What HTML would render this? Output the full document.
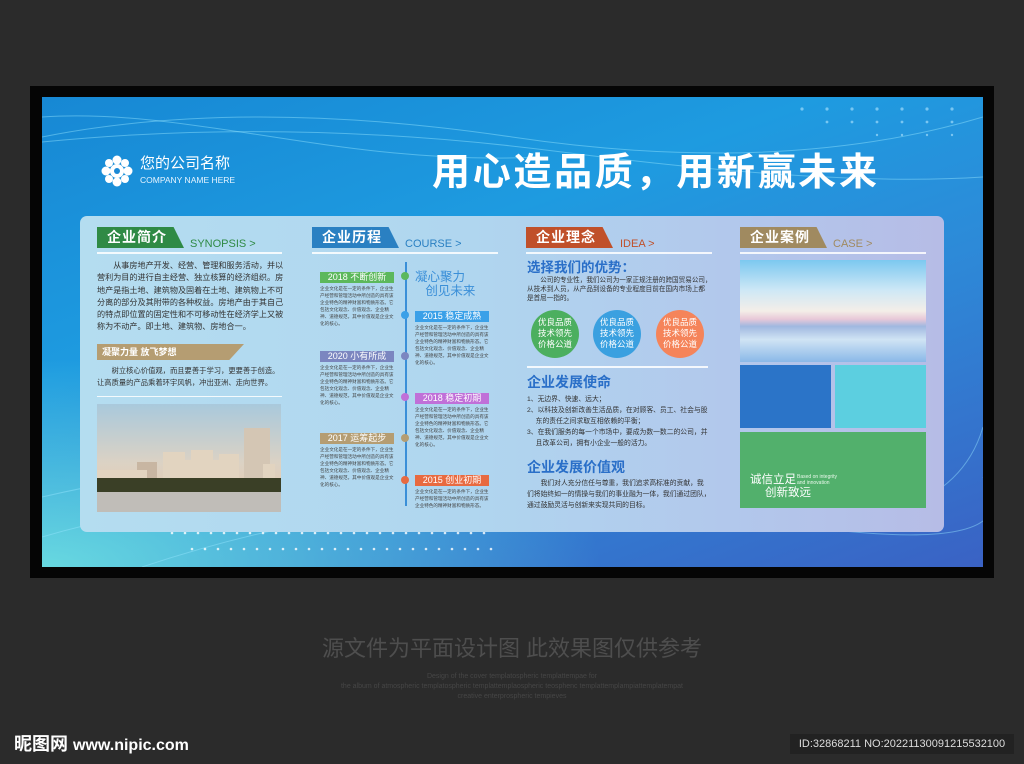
<!DOCTYPE html>
<html><head><meta charset="utf-8">
<style>
*{margin:0;padding:0;box-sizing:border-box}
body{width:1024px;height:764px;overflow:hidden;background:#2b2b2b;font-family:"Liberation Sans","Noto Sans CJK SC",sans-serif;position:relative}
.a{position:absolute}
.frame{left:30px;top:86px;width:964px;height:492px;background:#050505}
.bg{left:42px;top:97px;width:941px;height:470px;overflow:hidden;
background:linear-gradient(160deg,#1788d4 0%,#1e9be0 35%,#2d8ad8 60%,#3a62c4 100%)}
.bg:before{content:"";position:absolute;left:0;bottom:0;width:60%;height:45%;background:radial-gradient(ellipse at 0% 100%,rgba(110,225,225,.9),rgba(110,225,225,0) 70%)}
.panel{left:80px;top:216px;width:864px;height:316px;border-radius:7px;background:linear-gradient(90deg,#b4ddf0 0%,#b0d6ef 45%,#b2c8ec 75%,#b6bce6 100%)}
.tag{height:21px;color:#fff;font-weight:bold;font-size:14px;line-height:21px;padding-left:10px;clip-path:polygon(0 0,88% 0,100% 100%,0 100%);letter-spacing:1px}
.en{font-size:11px;line-height:12px}
.ul{height:2px;background:rgba(255,255,255,.85)}
.p{font-size:8.1px;line-height:12.3px;color:#333;white-space:nowrap}
.t{font-size:4.6px;line-height:7px;color:#444;width:76px}
.lab{height:11px;width:74px;color:#fff;font-size:9px;line-height:11px;text-align:center}
.dot{width:8px;height:8px;border-radius:50%}
.circ{width:48px;height:48px;border-radius:50%;color:#fff;font-size:8.5px;line-height:11px;text-align:center;padding-top:7px}
.h{color:#2a6fc8;font-weight:bold}
.s{font-size:6.8px;line-height:11px;color:#333;white-space:nowrap}
</style></head><body>
<div class="a frame"></div>
<div class="a bg">
<svg class="a" style="left:0;top:0" width="941" height="470">
<g fill="none" stroke="rgba(150,230,255,.45)" stroke-width="1">
<path d="M0 40 Q200 0 470 40 T941 20"/><path d="M0 45 Q250 20 520 55 T941 80"/>
<path d="M0 20 C150 10 300 70 500 60"/><path d="M0 400 Q300 330 600 400 T941 330"/>
<path d="M100 470 Q400 370 700 420 T941 380"/><path d="M0 440 Q200 380 500 410"/>
</g>
<g fill="rgba(180,230,255,.6)">
<circle cx="760" cy="12" r="1.6"/><circle cx="785" cy="12" r="1.6"/><circle cx="810" cy="12" r="1.6"/><circle cx="835" cy="12" r="1.6"/><circle cx="860" cy="12" r="1.6"/><circle cx="885" cy="12" r="1.6"/><circle cx="910" cy="12" r="1.6"/>
<circle cx="785" cy="25" r="1.4"/><circle cx="810" cy="25" r="1.4"/><circle cx="835" cy="25" r="1.4"/><circle cx="860" cy="25" r="1.4"/><circle cx="885" cy="25" r="1.4"/><circle cx="910" cy="25" r="1.4"/>
<circle cx="835" cy="38" r="1.2"/><circle cx="860" cy="38" r="1.2"/><circle cx="885" cy="38" r="1.2"/><circle cx="910" cy="38" r="1.2"/>
</g>
<g fill="rgba(255,255,255,.8)">
<circle cx="130" cy="436" r="1.3"/><circle cx="143" cy="436" r="1.3"/><circle cx="156" cy="436" r="1.3"/><circle cx="169" cy="436" r="1.3"/><circle cx="182" cy="436" r="1.3"/><circle cx="195" cy="436" r="1.3"/><circle cx="208" cy="436" r="1.3"/><circle cx="221" cy="436" r="1.3"/><circle cx="234" cy="436" r="1.3"/><circle cx="247" cy="436" r="1.3"/><circle cx="260" cy="436" r="1.3"/><circle cx="273" cy="436" r="1.3"/><circle cx="286" cy="436" r="1.3"/><circle cx="299" cy="436" r="1.3"/><circle cx="312" cy="436" r="1.3"/><circle cx="325" cy="436" r="1.3"/><circle cx="338" cy="436" r="1.3"/><circle cx="351" cy="436" r="1.3"/><circle cx="364" cy="436" r="1.3"/><circle cx="377" cy="436" r="1.3"/><circle cx="390" cy="436" r="1.3"/><circle cx="403" cy="436" r="1.3"/><circle cx="416" cy="436" r="1.3"/><circle cx="429" cy="436" r="1.3"/><circle cx="442" cy="436" r="1.3"/>
<circle cx="150" cy="452" r="1.3"/><circle cx="163" cy="452" r="1.3"/><circle cx="176" cy="452" r="1.3"/><circle cx="189" cy="452" r="1.3"/><circle cx="202" cy="452" r="1.3"/><circle cx="215" cy="452" r="1.3"/><circle cx="228" cy="452" r="1.3"/><circle cx="241" cy="452" r="1.3"/><circle cx="254" cy="452" r="1.3"/><circle cx="267" cy="452" r="1.3"/><circle cx="280" cy="452" r="1.3"/><circle cx="293" cy="452" r="1.3"/><circle cx="306" cy="452" r="1.3"/><circle cx="319" cy="452" r="1.3"/><circle cx="332" cy="452" r="1.3"/><circle cx="345" cy="452" r="1.3"/><circle cx="358" cy="452" r="1.3"/><circle cx="371" cy="452" r="1.3"/><circle cx="384" cy="452" r="1.3"/><circle cx="397" cy="452" r="1.3"/><circle cx="410" cy="452" r="1.3"/><circle cx="423" cy="452" r="1.3"/><circle cx="436" cy="452" r="1.3"/><circle cx="449" cy="452" r="1.3"/>
</g>
</svg>
<svg class="a" style="left:58px;top:57px" width="34" height="34" viewBox="0 0 34 34"><g fill="#fff"><circle cx="17" cy="6" r="4.5"/><circle cx="17" cy="28" r="4.5"/><circle cx="6" cy="17" r="4.5"/><circle cx="28" cy="17" r="4.5"/><circle cx="9" cy="9" r="4"/><circle cx="25" cy="9" r="4"/><circle cx="9" cy="25" r="4"/><circle cx="25" cy="25" r="4"/><circle cx="17" cy="17" r="7"/></g><circle cx="17" cy="17" r="3" fill="#1a8ad6"/></svg>
<div class="a" style="left:98px;top:58px;color:#fff;font-size:15px;line-height:17px">您的公司名称</div>
<div class="a" style="left:98px;top:78px;color:#e6f4ff;font-size:8.5px;line-height:10px">COMPANY NAME HERE</div>
<div class="a" style="left:390px;top:53px;color:#fff;font-size:38px;font-weight:bold;line-height:46px;letter-spacing:2.7px">用心造品质，用新赢未来</div>
</div>
<div class="a panel"></div>

<!-- col 1 -->
<div class="a tag" style="left:97px;top:227px;width:87px;background:#2f8a45">企业简介</div>
<div class="a en" style="left:190px;top:238px;color:#2f8a45">SYNOPSIS &gt;</div>
<div class="a ul" style="left:97px;top:252px;width:185px"></div>
<div class="a p" style="left:97px;top:260px">&emsp;&emsp;从事房地产开发、经营、管理和服务活动，并以<br>营利为目的进行自主经营、独立核算的经济组织。房<br>地产是指土地、建筑物及固着在土地、建筑物上不可<br>分离的部分及其附带的各种权益。房地产由于其自己<br>的特点即位置的固定性和不可移动性在经济学上又被<br>称为不动产。即土地、建筑物、房地合一。</div>
<div class="a" style="left:97px;top:344px;width:147px;height:16px;background:#b59d72;clip-path:polygon(0 0,100% 0,90% 100%,0 100%);color:#fff;font-size:9px;line-height:16px;padding-left:5px;font-weight:bold">凝聚力量 放飞梦想</div>
<div class="a p" style="left:97px;top:365px;font-size:7.3px">&emsp;&emsp;树立核心价值观，而且要善于学习，更要善于创造。<br>让高质量的产品乘着环宇风帆，冲出亚洲、走向世界。</div>
<div class="a ul" style="left:97px;top:396px;width:185px;height:1px"></div>
<svg class="a" style="left:97px;top:404px" width="184" height="108">
<defs><linearGradient id="sk" x1="0" y1="0" x2="0" y2="1"><stop offset="0" stop-color="#a9c9dc"/><stop offset=".55" stop-color="#dcd2c4"/><stop offset="1" stop-color="#e8c8a6"/></linearGradient></defs>
<rect width="184" height="108" fill="url(#sk)"/>
<g fill="#e2d4c0"><rect x="147" y="24" width="26" height="50" fill="#d4c6b4"/><rect x="166" y="60" width="12" height="16"/><rect x="66" y="48" width="22" height="26"/><rect x="94" y="46" width="22" height="28"/><rect x="122" y="50" width="20" height="24"/><rect x="84" y="56" width="40" height="18"/><rect x="40" y="58" width="20" height="18" fill="#c8b6a2"/><rect x="0" y="66" width="50" height="12"/></g>
<rect x="0" y="74" width="184" height="14" fill="#3a3f26"/><rect x="0" y="88" width="184" height="20" fill="#c0bdb8"/>
</svg>

<!-- col 2 -->
<div class="a tag" style="left:312px;top:227px;width:87px;background:#2a80c2">企业历程</div>
<div class="a en" style="left:405px;top:238px;color:#2a80c2">COURSE &gt;</div>
<div class="a ul" style="left:312px;top:252px;width:186px"></div>
<div class="a" style="left:405px;top:262px;width:1.5px;height:244px;background:#3a8fd8"></div>
<div class="a dot" style="left:401px;top:272px;background:#5cb85c"></div>
<div class="a dot" style="left:401px;top:311px;background:#3aa0e8"></div>
<div class="a dot" style="left:401px;top:352px;background:#7b86c0"></div>
<div class="a dot" style="left:401px;top:393px;background:#c070d8"></div>
<div class="a dot" style="left:401px;top:434px;background:#b59d72"></div>
<div class="a dot" style="left:401px;top:476px;background:#e86a40"></div>
<div class="a lab" style="left:320px;top:272px;background:#5cb85c">2018 不断创新</div>
<div class="a t" style="left:320px;top:285px">企业文化是在一定的条件下，企业生产经营和管理活动中所创造的具有该企业特色的精神财富和物质形态。它包括文化观念、价值观念、企业精神、道德规范，其中价值观是企业文化的核心。</div>
<div class="a lab" style="left:320px;top:351px;background:#7b86c0">2020 小有所成</div>
<div class="a t" style="left:320px;top:364px">企业文化是在一定的条件下，企业生产经营和管理活动中所创造的具有该企业特色的精神财富和物质形态。它包括文化观念、价值观念、企业精神、道德规范，其中价值观是企业文化的核心。</div>
<div class="a lab" style="left:320px;top:433px;background:#b59d72">2017 运筹起步</div>
<div class="a t" style="left:320px;top:446px">企业文化是在一定的条件下，企业生产经营和管理活动中所创造的具有该企业特色的精神财富和物质形态。它包括文化观念、价值观念、企业精神、道德规范，其中价值观是企业文化的核心。</div>
<div class="a" style="left:415px;top:270px;color:#3a8fd8;font-size:12.5px;line-height:14px">凝心聚力<br>&nbsp;&nbsp;&nbsp;创见未来</div>
<div class="a lab" style="left:415px;top:311px;background:#3aa0e8">2015 稳定成熟</div>
<div class="a t" style="left:415px;top:324px">企业文化是在一定的条件下，企业生产经营和管理活动中所创造的具有该企业特色的精神财富和物质形态。它包括文化观念、价值观念、企业精神、道德规范，其中价值观是企业文化的核心。</div>
<div class="a lab" style="left:415px;top:393px;background:#c070d8">2018 稳定初期</div>
<div class="a t" style="left:415px;top:406px">企业文化是在一定的条件下，企业生产经营和管理活动中所创造的具有该企业特色的精神财富和物质形态。它包括文化观念、价值观念、企业精神、道德规范，其中价值观是企业文化的核心。</div>
<div class="a lab" style="left:415px;top:475px;background:#e86a40">2015 创业初期</div>
<div class="a t" style="left:415px;top:488px">企业文化是在一定的条件下，企业生产经营和管理活动中所创造的具有该企业特色的精神财富和物质形态。</div>

<!-- col 3 -->
<div class="a tag" style="left:526px;top:227px;width:87px;background:#c0502a">企业理念</div>
<div class="a en" style="left:620px;top:238px;color:#c0502a">IDEA &gt;</div>
<div class="a ul" style="left:526px;top:252px;width:186px"></div>
<div class="a h" style="left:527px;top:260px;font-size:13.5px;line-height:16px">选择我们的优势：</div>
<div class="a s" style="left:527px;top:276px;font-size:6.6px;line-height:9px">&emsp;&emsp;公司的专业性，我们公司为一家正规注册的跨国贸易公司，<br>从技术到人员，从产品到设备的专业程度目前在国内市场上都<br>是首屈一指的。</div>
<div class="a circ" style="left:531px;top:310px;background:#4caf5f">优良品质<br>技术领先<br>价格公道</div>
<div class="a circ" style="left:593px;top:310px;background:#3aa0e0">优良品质<br>技术领先<br>价格公道</div>
<div class="a circ" style="left:656px;top:310px;background:#f5845a">优良品质<br>技术领先<br>价格公道</div>
<div class="a ul" style="left:527px;top:366px;width:181px"></div>
<div class="a h" style="left:527px;top:374px;font-size:14px;line-height:17px">企业发展使命</div>
<div class="a s" style="left:527px;top:394px">1、无边界、快速、远大；<br>2、以科技及创新改善生活品质，在对顾客、员工、社会与股<br>&emsp;&nbsp;东的责任之间求取互相依赖的平衡；<br>3、在我们服务的每一个市场中，要成为数一数二的公司，并<br>&emsp;&nbsp;且改革公司，拥有小企业一般的活力。</div>
<div class="a h" style="left:527px;top:459px;font-size:14px;line-height:17px">企业发展价值观</div>
<div class="a s" style="left:527px;top:478px">&emsp;&emsp;我们对人充分信任与尊重，我们追求高标准的贡献，我<br>们将始终如一的情操与我们的事业融为一体，我们通过团队，<br>通过鼓励灵活与创新来实现共同的目标。</div>

<!-- col 4 -->
<div class="a tag" style="left:740px;top:227px;width:87px;background:#a08a60">企业案例</div>
<div class="a en" style="left:833px;top:238px;color:#a08a60">CASE &gt;</div>
<div class="a ul" style="left:740px;top:252px;width:186px"></div>
<div class="a" style="left:740px;top:260px;width:186px;height:102px;background:linear-gradient(180deg,#7cc8f0 0%,#cfe8f6 30%,#f4eee8 50%,#e8c8d8 58%,#a0b8e0 65%,#d0e4f4 78%,#8ab8e8 100%)"></div>
<div class="a" style="left:740px;top:365px;width:91px;height:63px;background:#2b74c8"></div>
<div class="a" style="left:835px;top:365px;width:91px;height:63px;background:#5ccfe0"></div>
<div class="a" style="left:740px;top:432px;width:186px;height:76px;background:#52b06c"></div>
<div class="a" style="left:750px;top:474px;color:#fff;font-size:11.5px;line-height:13px">诚信立足</div>
<div class="a" style="left:797px;top:475px;color:#e8f8ea;font-size:5px;line-height:5.5px">Based on integrity<br>and innovation</div>
<div class="a" style="left:765px;top:487px;color:#fff;font-size:11.5px;line-height:13px">创新致远</div>

<!-- footer -->
<div class="a" style="left:0;top:636px;width:1024px;text-align:center;color:#4e4e4e;font-size:22px;line-height:26px">源文件为平面设计图 此效果图仅供参考</div>
<div class="a" style="left:0;top:672px;width:1024px;text-align:center;color:#464646;font-size:7px;line-height:10px">Design of the cover templatospheric templattempae for<br>the album of atmospheric templatospheric templattemplaospheric teosphenc templattemplampiattemplatempat<br>creative enterprospheric tempieves</div>
<div class="a" style="left:14px;top:732px;color:#fff;font-size:18px;font-weight:bold;line-height:24px">昵图网 <span style="font-size:16px">www.nipic.com</span></div>
<div class="a" style="left:790px;top:734px;width:224px;height:20px;background:#222;color:#ddd;font-size:11px;line-height:20px;text-align:center">ID:32868211 NO:20221130091215532100</div>
</body></html>
